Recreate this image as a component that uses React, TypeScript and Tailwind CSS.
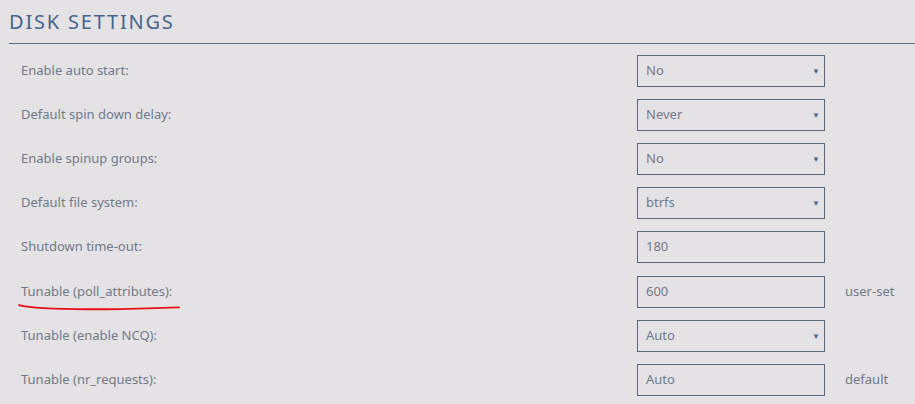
type Row = {
  label: string;
  value: string;
  kind: "select" | "input";
  note?: string;
  marked?: boolean;
};

const rows: Row[] = [
  { label: "Enable auto start:", value: "No", kind: "select" },
  { label: "Default spin down delay:", value: "Never", kind: "select" },
  { label: "Enable spinup groups:", value: "No", kind: "select" },
  { label: "Default file system:", value: "btrfs", kind: "select" },
  { label: "Shutdown time-out:", value: "180", kind: "input" },
  { label: "Tunable (poll_attributes):", value: "600", kind: "input", note: "user-set", marked: true },
  { label: "Tunable (enable NCQ):", value: "Auto", kind: "select" },
  { label: "Tunable (nr_requests):", value: "Auto", kind: "input", note: "default" },
];

function Scribble() {
  // hand-drawn red underline
  return (
    <svg
      className="absolute left-[-3px] top-[21px] pointer-events-none"
      width="164"
      height="9"
      viewBox="0 0 164 9"
    >
      <path
        d="M1 2.2 C 10 4.5, 30 6.2, 70 6.3 S 135 5, 161 4.4"
        fill="none"
        stroke="#ea0f17"
        strokeWidth="1.9"
        strokeLinecap="round"
      />
    </svg>
  );
}

function Field({ row }: { row: Row }) {
  return (
    <div className="w-[188px] h-[32px] border border-[#5d6679] flex items-center justify-between pl-[8px] pr-[4px] text-[13px] text-[#727989]">
      <span>{row.value}</span>
      {row.kind === "select" && (
        <span className="text-[8px] text-[#5d6679] leading-none">▼</span>
      )}
    </div>
  );
}

export default function App() {
  return (
    <div
      className="min-h-screen w-[915px] h-[404px] overflow-hidden bg-[#e4e2e5]"
      style={{ fontFamily: '"Noto Sans", "Open Sans", sans-serif' }}
    >
      <div className="pl-[9px]">
        <div className="h-[44px] border-b border-[#5f6d88] flex items-center pt-[1px]">
          <h1 className="text-[20px] tracking-[0.09em] text-[#47648a] leading-none">
            DISK SETTINGS
          </h1>
        </div>
      </div>

      <div className="pt-[5px]">
        {rows.map((row, i) => (
          <div key={row.label} className={`h-[44px] flex items-center ${i === 5 ? "mt-[1px]" : ""}`}>
            <div className="w-[637px] pl-[21px] text-[13px] text-[#727989]">
              <span className="relative">
                {row.label}
                {row.marked && <Scribble />}
              </span>
            </div>
            <Field row={row} />
            {row.note && (
              <span className="ml-[20px] text-[13px] text-[#727989]">{row.note}</span>
            )}
          </div>
        ))}
      </div>
    </div>
  );
}
